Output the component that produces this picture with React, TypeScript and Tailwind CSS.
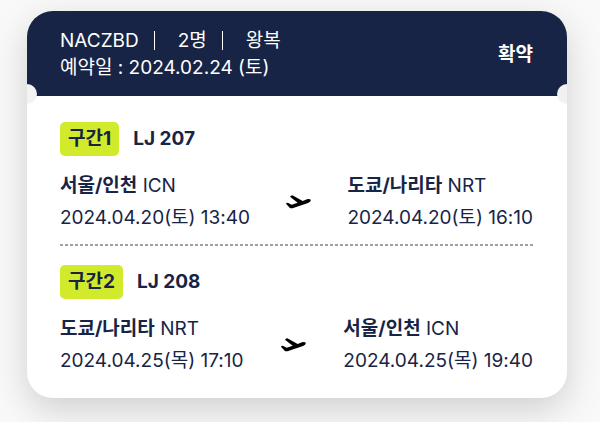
type Stop = { city: string; code: string; time: string };
type Segment = { label: string; flight: string; from: Stop; to: Stop };

const segments: Segment[] = [
  {
    label: '구간1',
    flight: 'LJ 207',
    from: { city: '서울/인천', code: 'ICN', time: '2024.04.20(토) 13:40' },
    to: { city: '도쿄/나리타', code: 'NRT', time: '2024.04.20(토) 16:10' },
  },
  {
    label: '구간2',
    flight: 'LJ 208',
    from: { city: '도쿄/나리타', code: 'NRT', time: '2024.04.25(목) 17:10' },
    to: { city: '서울/인천', code: 'ICN', time: '2024.04.25(목) 19:40' },
  },
];

function Plane() {
  return (
    <svg viewBox="0 0 75 42" className="h-3.5 w-[25px] shrink-0" fill="#000" aria-hidden="true">
      <path d="M0 26 Q2 22 7 24 L17 29 L35 23 L14 7 Q11 3 15 2 L19 1 L50 18 L63 13 Q71 10 74 14 Q76 19 66 24 L24 38 Q15 42 11 38 Z" />
    </svg>
  );
}

function StopInfo({ stop }: { stop: Stop }) {
  return (
    <div className="text-[19px] leading-8 whitespace-nowrap">
      <p>
        <strong className="font-bold">{stop.city}</strong> <span>{stop.code}</span>
      </p>
      <p>{stop.time}</p>
    </div>
  );
}

function SegmentRow({ segment }: { segment: Segment }) {
  return (
    <section className="pb-2.5">
      <div className="flex items-center gap-3.5">
        <span className="rounded-[5px] bg-[#d2ea2c] px-2 text-[19px] leading-[34px] font-bold">{segment.label}</span>
        <h2 className="text-[19px] leading-[34px] font-bold">{segment.flight}</h2>
      </div>
      <div className="mt-3.5 flex items-center justify-between">
        <StopInfo stop={segment.from} />
        <Plane />
        <StopInfo stop={segment.to} />
      </div>
    </section>
  );
}

export default function App() {
  return (
    <main className="min-h-screen overflow-hidden bg-[#f9f9f9] pt-[11px] pr-[33px] pb-6 pl-[27px] font-['Inter','Noto_Sans_CJK_KR',sans-serif] text-[#182445]">
      <article className="rounded-[26px] bg-white shadow-[0_12px_36px_rgba(0,0,0,0.17)]">
        <header className="relative flex items-center justify-between rounded-t-[26px] bg-[#182445] pt-4 pr-[34px] pb-[15px] pl-[33px] text-white">
          <div className="text-[19px] leading-[27px]">
            <p className="flex whitespace-pre">
              <span>NACZBD</span>
              <span className="mx-[15px] my-1 w-px bg-white" />
              <span className="ml-2">2명</span>
              <span className="mx-[15px] my-1 w-px bg-white" />
              <span className="ml-2">왕복</span>
            </p>
            <p>예약일 : 2024.02.24 (토)</p>
          </div>
          <strong className="text-[19px] leading-[27px] font-bold">확약</strong>
          <span className="absolute -bottom-2 left-0 h-5 w-2.5 rounded-r-full bg-[#f3f3f3]" />
          <span className="absolute right-0 -bottom-2 h-5 w-2.5 rounded-l-full bg-[#f1f1f1]" />
        </header>
        <div className="pt-[26px] pr-[34px] pb-[11px] pl-[33px]">
          <SegmentRow segment={segments[0]} />
          <hr className="mb-[19px] h-0.5 border-0 bg-[repeating-linear-gradient(90deg,#a0a0a0_0_3px,transparent_3px_5px)]" />
          <SegmentRow segment={segments[1]} />
        </div>
      </article>
    </main>
  );
}
